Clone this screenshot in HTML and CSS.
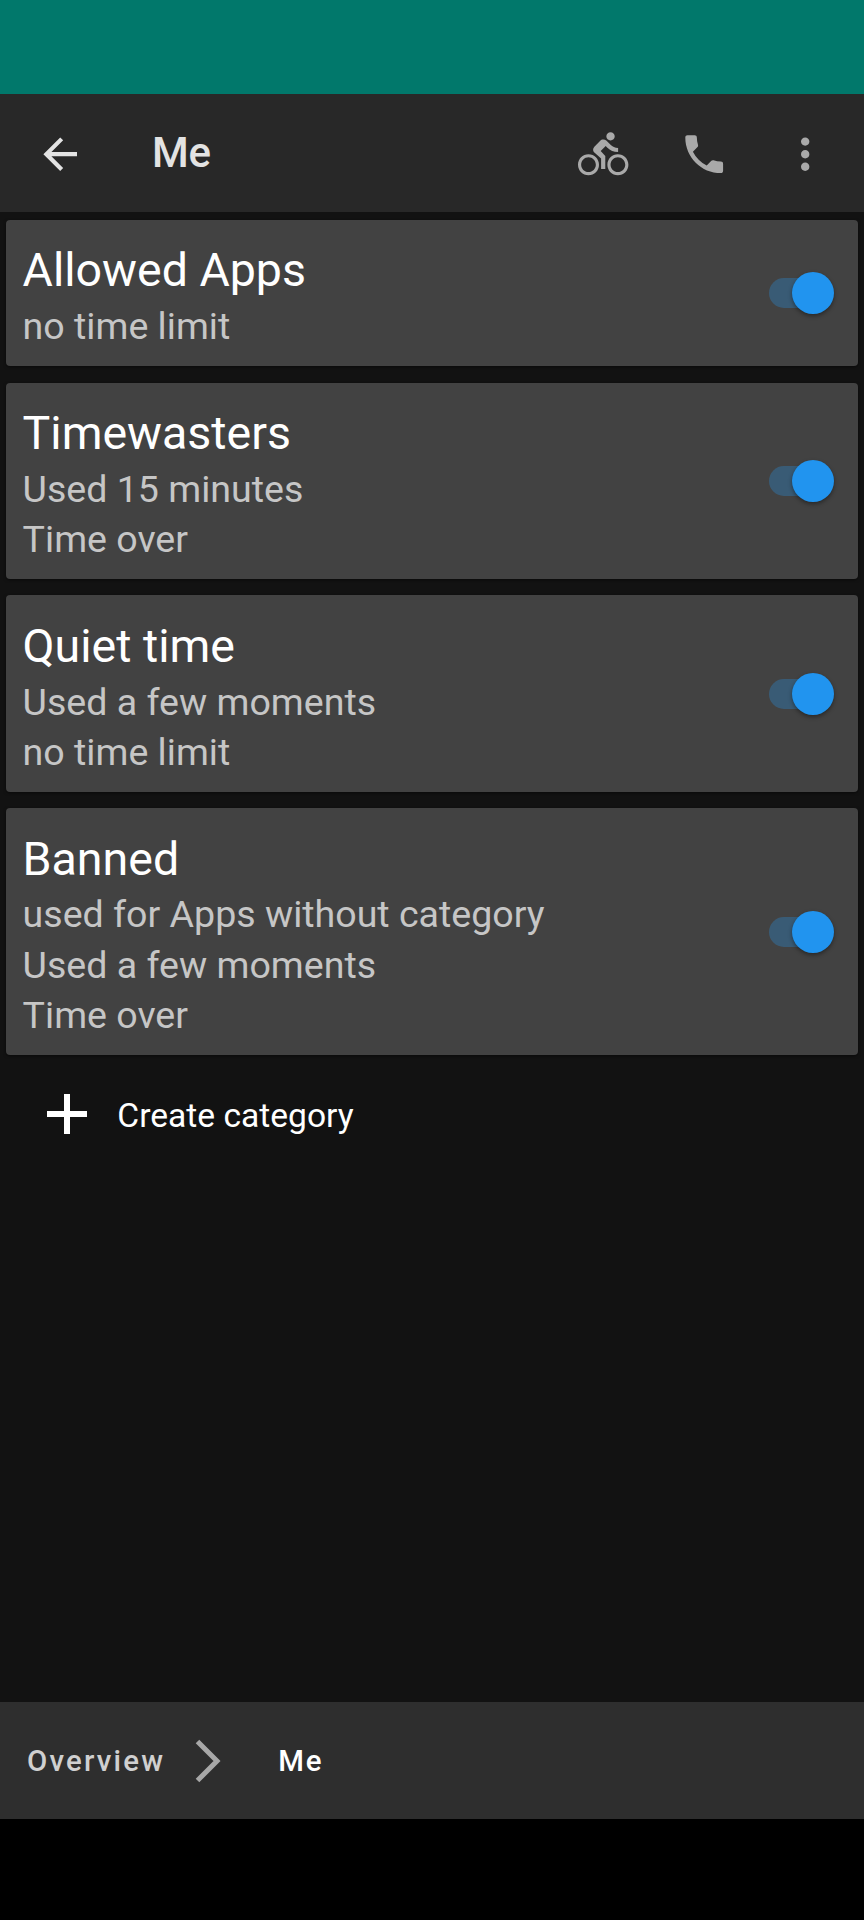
FILE: index.html
```html
<!DOCTYPE html>
<html lang="en">
<head>
<meta charset="utf-8">
<title>Me</title>
<link rel="stylesheet" href="styles.css">
</head>
<body>
<div class="screen">
  <div class="status-bar"></div>
  <header class="toolbar">
    <svg class="icon back" viewBox="0 0 24 24"><path d="M20 11H7.83l5.59-5.59L12 4l-8 8 8 8 1.41-1.41L7.83 13H20v-2z"/></svg>
    <h1 class="toolbar-title">Me</h1>
    <svg class="icon action" viewBox="0 0 24 24"><path d="M15.5 5.5c1.1 0 2-.9 2-2s-.9-2-2-2-2 .9-2 2 .9 2 2 2zM5 12c-2.8 0-5 2.2-5 5s2.2 5 5 5 5-2.2 5-5-2.2-5-5-5zm0 8.5c-1.9 0-3.5-1.6-3.5-3.5s1.6-3.5 3.5-3.5 3.5 1.6 3.5 3.5-1.6 3.5-3.5 3.5zm5.8-10l2.4-2.4.8.8c1.3 1.3 3 2.1 5.1 2.1V9c-1.5 0-2.7-.6-3.6-1.5l-1.9-1.9c-.5-.4-1-.6-1.6-.6s-1.1.2-1.4.6L7.8 8.4c-.4.4-.6.9-.6 1.4 0 .6.2 1.1.6 1.4L11 14v5h2v-6.2l-2.2-2.3zM19 12c-2.8 0-5 2.2-5 5s2.2 5 5 5 5-2.2 5-5-2.2-5-5-5zm0 8.5c-1.9 0-3.5-1.6-3.5-3.5s1.6-3.5 3.5-3.5 3.5 1.6 3.5 3.5-1.6 3.5-3.5 3.5z"/></svg>
    <svg class="icon action" viewBox="0 0 24 24"><path d="M6.62 10.79c1.44 2.83 3.76 5.14 6.59 6.59l2.2-2.2c.27-.27.67-.36 1.02-.24 1.12.37 2.33.57 3.57.57.55 0 1 .45 1 1V20c0 .55-.45 1-1 1-9.39 0-17-7.61-17-17 0-.55.45-1 1-1h3.5c.55 0 1 .45 1 1 0 1.25.2 2.45.57 3.57.11.35.03.74-.25 1.02l-2.2 2.2z"/></svg>
    <svg class="icon action" viewBox="0 0 24 24"><path d="M12 8c1.1 0 2-.9 2-2s-.9-2-2-2-2 .9-2 2 .9 2 2 2zm0 2c-1.1 0-2 .9-2 2s.9 2 2 2 2-.9 2-2-.9-2-2-2zm0 6c-1.1 0-2 .9-2 2s.9 2 2 2 2-.9 2-2-.9-2-2-2z"/></svg>
  </header>
  <main class="content">
    <section class="card">
      <div class="card-text"><h2 class="card-title">Allowed Apps</h2><p class="card-line">no time limit</p></div>
      <div class="switch"><span class="thumb"></span></div>
    </section>
    <section class="card">
      <div class="card-text"><h2 class="card-title">Timewasters</h2><p class="card-line">Used 15 minutes</p><p class="card-line">Time over</p></div>
      <div class="switch"><span class="thumb"></span></div>
    </section>
    <section class="card">
      <div class="card-text"><h2 class="card-title">Quiet time</h2><p class="card-line">Used a few moments</p><p class="card-line">no time limit</p></div>
      <div class="switch"><span class="thumb"></span></div>
    </section>
    <section class="card">
      <div class="card-text"><h2 class="card-title">Banned</h2><p class="card-line">used for Apps without category</p><p class="card-line">Used a few moments</p><p class="card-line">Time over</p></div>
      <div class="switch"><span class="thumb"></span></div>
    </section>
    <div class="create">
      <svg class="plus" viewBox="0 0 40 40"><path d="M17 0h6v17h17v6H23v17h-6V23H0v-6h17z"/></svg>
      <span class="create-label">Create category</span>
    </div>
  </main>
  <nav class="breadcrumb">
    <span class="crumb">Overview</span>
    <svg class="chevron" viewBox="0 0 26 44"><path d="M2.5 2.5L22 22 2.5 41.5"/></svg>
    <span class="crumb current">Me</span>
  </nav>
  <div class="nav-bar"></div>
</div>
</body>
</html>
```
FILE: styles.css
```css
* { box-sizing: border-box; }
body { margin: 0; background: #000; font-family: Roboto, "Liberation Sans", sans-serif; }
h1, h2, p { margin: 0; }
.screen { display: flex; flex-direction: column; width: 864px; height: 1920px; background: #121212; }
.status-bar { height: 94.4px; background: #01786b; }
.toolbar { display: flex; align-items: center; height: 117.6px; padding: 1.5px 33.6px 0 34.5px; background: #282828; }
.icon { flex: none; width: 50.4px; height: 50.4px; fill: #e3e3e3; }
.action { margin-left: 50.4px; fill: #a9a9a9; }
.toolbar-title { flex: 1; margin-left: 67px; padding-bottom: 2px; color: #e3e3e3; font-size: 42px; font-weight: 500; line-height: 50px; }
.content { display: flex; flex: 1; flex-direction: column; gap: 16.3px; padding: 8px 5.7px 0 5.6px; }
.card { display: flex; align-items: center; justify-content: space-between; padding: 23.5px 24px 14.9px 17px; border-radius: 4px; background: #424242; box-shadow: 0 1px 3px rgba(0, 0, 0, .5); }
.card-title { margin-bottom: 3.7px; color: #fff; font-size: 46.5px; font-weight: 400; line-height: 54px; }
.card-line { color: #c6c6c6; font-size: 37.55px; line-height: 50.2px; }
.switch { display: flex; align-items: center; justify-content: flex-end; width: 65.7px; height: 30px; margin-top: -8px; border-radius: 15px; background: linear-gradient(to right, #395b75 50px, transparent 50px); }
.thumb { width: 42px; height: 42px; flex: none; border-radius: 50%; background: #2194ef; box-shadow: 0 2px 4px rgba(0, 0, 0, .4); }
.create { display: flex; align-items: center; gap: 30px; margin-top: 20.5px; padding-left: 41.7px; }
.plus { width: 40px; height: 40px; fill: #fff; }
.create-label { padding-top: 3px; color: #fff; font-size: 33.6px; line-height: 42px; }
.breadcrumb { display: flex; align-items: center; height: 117.5px; padding: 1.5px 0 0 27px; background: #2e2e2e; }
.crumb { color: #d0d0d0; font-size: 29.4px; font-weight: 500; letter-spacing: 2.2px; line-height: 40px; }
.current { margin-left: 57px; color: #fff; letter-spacing: 1.8px; }
.chevron { width: 26px; height: 44px; margin-left: 30px; fill: none; stroke: #a8a8a8; stroke-width: 5px; }
.nav-bar { height: 101px; background: #000; }
```
